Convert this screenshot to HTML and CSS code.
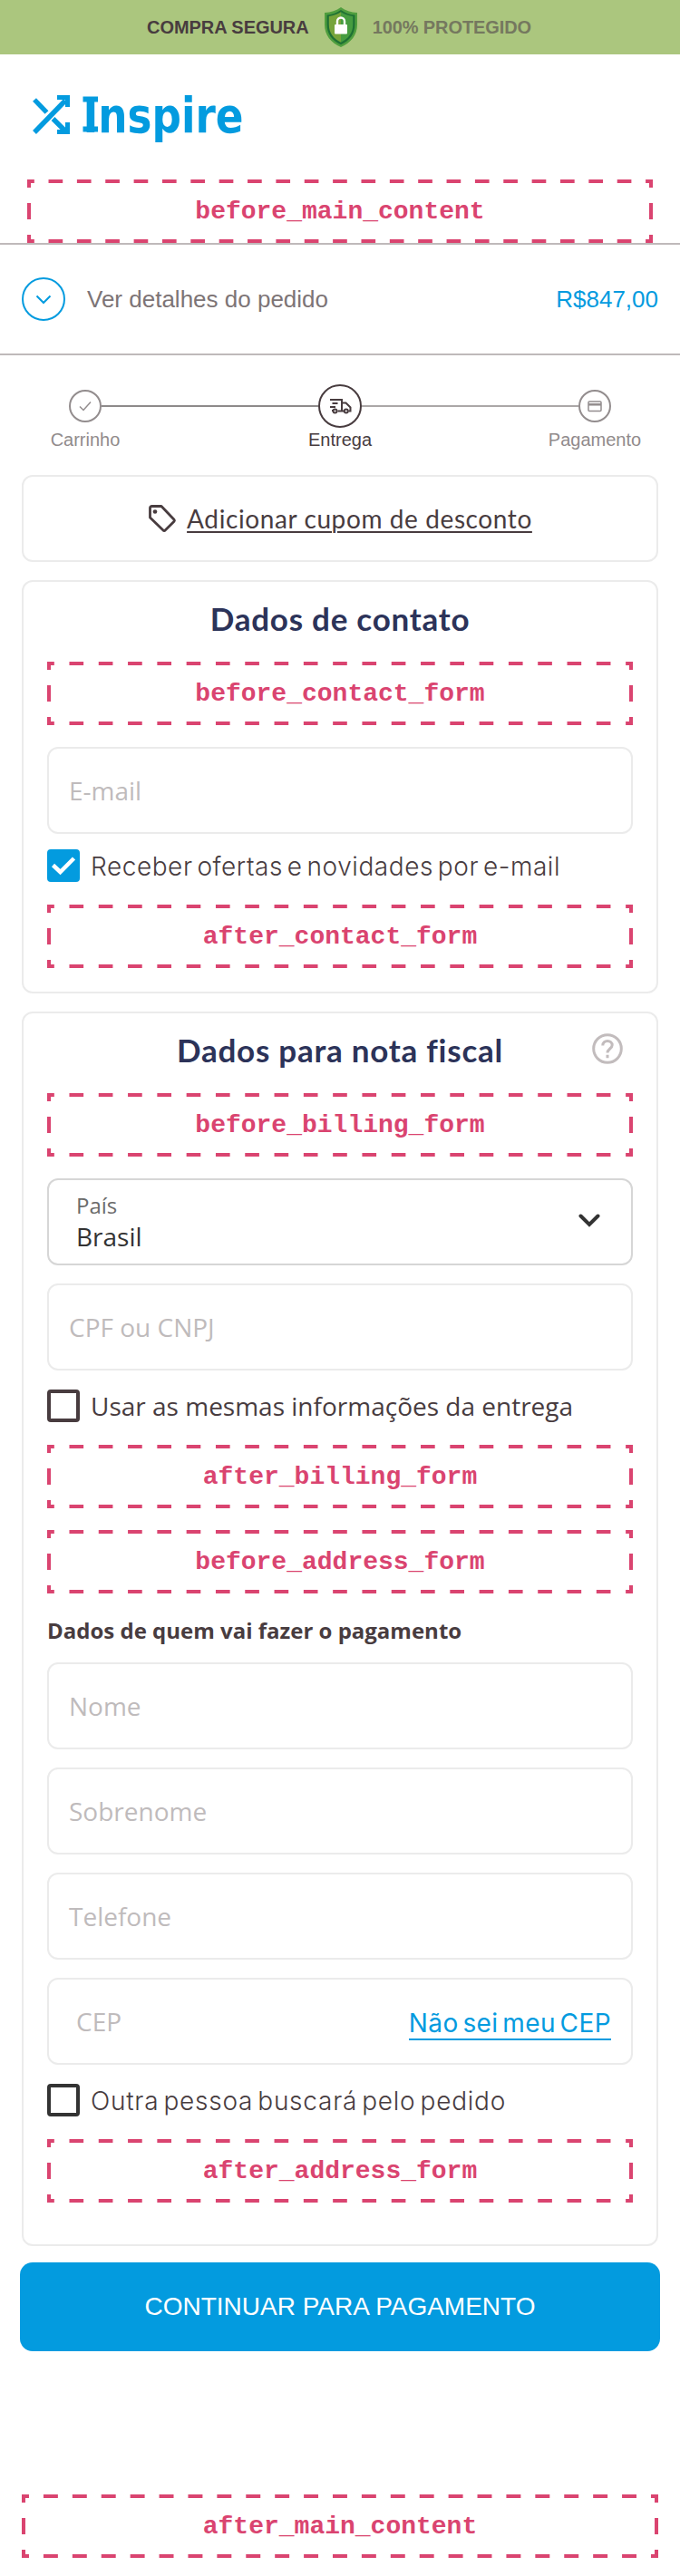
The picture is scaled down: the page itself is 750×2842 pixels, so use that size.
FILE: index.html
```html
<!DOCTYPE html>
<html lang="pt-BR">
<head>
<meta charset="utf-8">
<title>Inspire - Entrega</title>
<link rel="stylesheet" href="styles.css">
</head>
<body>
<header class="banner">
  <span class="banner-strong">COMPRA SEGURA</span>
  <svg class="shield" width="36" height="44" viewBox="0 0 36 44">
    <path d="M18 0C13 4 7 5.600 0 6v13c0 12 7 20 18 25 11-5 18-13 18-25V6C29 5.600 23 4 18 0z" fill="#4f9e3e"/>
    <path d="M18 3C13 6.600 8 8 2.500 8.400V19c0 10.500 6 17.800 15.500 22.300C27.500 36.800 33.500 29.500 33.500 19V8.400C28 8 23 6.600 18 3z" fill="#1f7134"/>
    <path d="M18 5.200c-4 2.700-8 4-13.200 4.700V19c0 9.500 5 15.500 13.200 19.700z" fill="#76a43a"/>
    <path d="M18 5.200c4 2.700 8 4 13.200 4.700V19c0 9.500-5 15.500-13.200 19.700z" fill="#469c40"/>
    <rect x="11" y="19" width="14" height="10.500" rx="1" fill="#fff"/>
    <path d="M14 20v-4.500a4 4 0 0 1 8 0V20" fill="none" stroke="#fff" stroke-width="2.400"/>
  </svg>
  <span class="banner-soft">100% PROTEGIDO</span>
</header>

<div class="brand">
  <svg class="logo" width="244" height="84" viewBox="0 -14 244 84">
    <g fill="none" stroke="#039bdf" stroke-width="5.400">
      <path d="M2 42L36 7"/><path d="M2 6l13.500 14"/><path d="M22.500 27L37 41.500"/>
    </g>
    <path d="M27 1h14v13h-5V6h-9zM27 44h14V31h-5v8h-9z" fill="#039bdf"/>
    <path d="M55.500 2.500h16.500v6H55.500zM55.500 35.500h16.500v6H55.500z" fill="#039bdf"/>
    <text class="logo-text" x="55.500" y="41.500" textLength="177" lengthAdjust="spacingAndGlyphs">Inspire</text>
  </svg>
</div>

<div class="slot slot-top">before_main_content</div>

<section class="summary">
  <svg width="48" height="48" viewBox="0 0 48 48" fill="none" stroke="#039bdf" stroke-width="2">
    <circle cx="24" cy="24" r="23"/><path d="M16.500 20.500L24 28l7.500-7.500"/>
  </svg>
  <span class="summary-label">Ver detalhes do pedido</span>
  <span class="summary-total">R$847,00</span>
</section>

<nav class="steps">
  <div class="track">
    <svg width="36" height="36" viewBox="0 0 36 36" fill="none" stroke="#938d8e" stroke-width="2">
      <circle cx="18" cy="18" r="17"/><path d="M12 18.500l4 4 8-9" stroke-width="1.500"/>
    </svg>
    <span class="line line-done"></span>
    <svg width="48" height="48" viewBox="0 0 48 48" fill="none" stroke="#483c3f" stroke-width="2">
      <circle cx="24" cy="24" r="23"/>
      <path d="M13 17h13v12.500h-4.500M26 20.500h4.500l5 5v4h-2M15.500 21h6M13 25h6M15 29h1.500M26 29.500h2"/>
      <circle cx="18.500" cy="29.500" r="2"/><circle cx="30.800" cy="29.500" r="2"/>
    </svg>
    <span class="line"></span>
    <svg width="36" height="36" viewBox="0 0 36 36" fill="none" stroke="#938d8e" stroke-width="2">
      <circle cx="18" cy="18" r="17"/><rect x="11" y="13" width="14" height="10.500" rx="1" stroke-width="1.500"/><path d="M11 16.300h14" stroke-width="2.500"/>
    </svg>
  </div>
  <div class="step-names"><span>Carrinho</span><span class="current">Entrega</span><span>Pagamento</span></div>
</nav>

<main class="content">
  <section class="card coupon">
    <svg width="32" height="32" viewBox="0 0 32 32" fill="none" stroke="#483c3f" stroke-width="2.800">
      <path d="M2.500 4.500a2 2 0 0 1 2-2H15L29 17.200a1.500 1.500 0 0 1 0 2L19.200 29a1.500 1.500 0 0 1-2.200 0L2.500 15z" stroke-linejoin="round"/>
      <circle cx="8" cy="8.500" r="2.300" fill="#483c3f" stroke="none"/>
    </svg>
    <a class="coupon-link">Adicionar cupom de desconto</a>
  </section>

  <section class="card contact">
    <h2 class="title">Dados de contato</h2>
    <div class="slot">before_contact_form</div>
    <div class="field first">E-mail</div>
    <label class="check offers"><span class="box checked"><svg width="28" height="22" viewBox="0 0 28 22" fill="none" stroke="#fff" stroke-width="4.500"><path d="M2.500 10.500l8 7.500L25.500 3"/></svg></span><span class="sans">Receber ofertas e novidades por e-mail</span></label>
    <div class="slot">after_contact_form</div>
  </section>

  <section class="card billing">
    <div class="title-row">
      <h2 class="title title-billing">Dados para nota fiscal</h2>
      <svg class="help" width="34" height="34" viewBox="0 0 34 34" fill="none" stroke="#c2bcbd" stroke-width="3">
        <circle cx="17" cy="17" r="15.300"/><path d="M11.800 13.500c0-6.800 10.400-6.500 10.400-.4 0 3.700-5.200 4.200-5.200 8.400M17 23.800v3.400"/>
      </svg>
    </div>
    <div class="slot">before_billing_form</div>
    <div class="field select first">
      <div class="select-text"><span class="select-label">País</span><span>Brasil</span></div>
      <svg width="24" height="16" viewBox="0 0 24 16" fill="none" stroke="#333" stroke-width="4"><path d="M2.500 2.500L12 12l9.500-9.500" stroke-linecap="round"/></svg>
    </div>
    <div class="field">CPF ou CNPJ</div>
    <label class="check same"><span class="box"></span><span>Usar as mesmas informações da entrega</span></label>
    <div class="slot">after_billing_form</div>
    <div class="slot slot-address">before_address_form</div>
    <h3 class="payer">Dados de quem vai fazer o pagamento</h3>
    <div class="field name">Nome</div>
    <div class="field">Sobrenome</div>
    <div class="field">Telefone</div>
    <div class="field cep"><span>CEP</span><a class="cep-link sans">Não sei meu CEP</a></div>
    <label class="check other"><span class="box dark"></span><span class="sans">Outra pessoa buscará pelo pedido</span></label>
    <div class="slot">after_address_form</div>
  </section>
</main>

<div class="button">CONTINUAR PARA PAGAMENTO</div>
<div class="slot slot-end">after_main_content</div>
</body>
</html>
```
FILE: styles.css
```css
* { box-sizing: border-box; }
body { margin: 0; background: #fff; color: #483c3f; font-family: "Liberation Sans", Arial, sans-serif; }
svg { flex: none; display: block; }

.banner { height: 60px; background: #abc67e; display: flex; align-items: center; justify-content: center; gap: 17px; font-size: 20px; font-weight: 700; line-height: 24px; }
.banner-strong { letter-spacing: -0.05px; }
.banner-soft { color: #75785f; padding-right: 2px; letter-spacing: -0.1px; }

.brand { height: 138px; padding: 30px 0 0 36px; }
.logo-text { font-family: "DejaVu Sans Condensed", "DejaVu Sans", sans-serif; font-weight: 700; font-size: 53px; fill: #039bdf; }

/* Dashed extension slot: each tile holds half a dash at both ends */
.slot {
  --c: #da4470;
  --h: linear-gradient(90deg, var(--c) 8px, transparent 8px calc(100% - 8px), var(--c) calc(100% - 8px));
  --v: linear-gradient(var(--c) 9px, transparent 9px calc(100% - 9px), var(--c) calc(100% - 9px));
  --n: 20;
  height: 70px; padding-top: 2px;
  display: flex; align-items: center; justify-content: center;
  background: var(--h) 0 0 / calc(100% / var(--n)) 4px repeat-x, var(--h) 0 100% / calc(100% / var(--n)) 4px repeat-x,
    var(--v) 0 0 / 4px 35px repeat-y, var(--v) 100% 0 / 4px 35px repeat-y;
  color: #da4470; font: 700 28px/32px "Liberation Mono", "Courier New", monospace;
}
.slot-top { --n: 22; margin: 0 30px; }

.summary { height: 124px; border-top: 2px solid #bfb9ba; border-bottom: 2px solid #bfb9ba; padding: 0 24px; display: flex; align-items: center; font-size: 26px; }
.summary-label { margin-left: 24px; color: #7d7476; }
.summary-total { margin-left: auto; color: #039bdf; }

.steps { height: 132px; padding: 32px 42px 0; }
.track { display: flex; align-items: center; padding: 0 34px; }
.line { flex: 1; height: 2px; background: #aba7a7; }
.line-done { background: #8d8a8a; }
.step-names { display: flex; justify-content: space-between; font-size: 20px; line-height: 26px; color: #918b8c; text-align: center; }
.step-names span { width: 104px; }
.step-names .current { color: #483c3f; }

.content { padding: 0 24px; display: flex; flex-direction: column; gap: 20px; }
.card { border: 2px solid #ebebeb; border-radius: 12px; padding: 0 26px; }
.coupon { height: 96px; display: flex; align-items: center; justify-content: center; gap: 11px; }
.coupon-link { font: 400 28px/34px Lato, sans-serif; letter-spacing: 0.6px; text-decoration: underline; text-decoration-thickness: 2px; text-underline-offset: 3px; }
.title { margin: 0; text-align: center; color: #2c3359; font: 700 35px/40px Lato, sans-serif; letter-spacing: 0.75px; white-space: nowrap; }
.contact { height: 456px; }
.contact .title, .title-row { padding-top: 20px; margin-bottom: 28px; }
.title-row { display: grid; grid-template-columns: 34px 1fr 34px; padding: 20px 11px 0 11px; }
.title-billing { grid-column: 2; }
.help { margin-top: 2px; }

.field { height: 96px; margin-top: 20px; border: 2px solid #ebebeb; border-radius: 12px; padding: 0 22px; display: flex; align-items: center; font: 400 28px/36px "Open Sans", "Noto Sans", sans-serif; color: #bfbbbc; }
.field.first { margin-top: 24px; }
.select { border-color: #d6d6d6; color: #333; padding: 0 34px 2px 30px; justify-content: space-between; }
.select-text { display: flex; flex-direction: column; }
.select-label { font-size: 24px; line-height: 33px; color: #6b6b6b; }
.cep { padding-left: 30px; justify-content: space-between; }
.sans { font-family: Inter, sans-serif; font-weight: 300; letter-spacing: 0.55px; word-spacing: -3.5px; padding-top: 2px; }
.cep-link { color: #039bdf; border-bottom: 2px solid #039bdf; line-height: 34px; padding-top: 0; margin-top: 5px; font-weight: 400; letter-spacing: 0.4px; }

.check { display: flex; align-items: center; gap: 12px; height: 36px; font: 400 28px/36px "Open Sans", "Noto Sans", sans-serif; white-space: nowrap; }
.box { width: 36px; height: 36px; border: 4px solid #483c3f; border-radius: 4px; display: flex; align-items: center; justify-content: center; flex: none; }
.box.checked { background: #039bdf; border-color: #039bdf; }
.box.dark { border-color: #333; }
.offers { margin: 17px 0 25px; }
.same { margin: 21px 0 25px; }
.other { margin: 21px 0 25px; }
.other .sans { letter-spacing: 0.75px; }
.slot-address { margin-top: 24px; }
.payer { margin: 24px 0 0; font: 700 24px/33px "Open Sans", "Noto Sans", sans-serif; }
.field.name { margin-top: 19px; }
.billing { height: 1362px; }

.button { margin: 18px 22px 0; height: 98px; border-radius: 14px; background: #039bdf; color: #fff; font-size: 28px; display: flex; align-items: center; justify-content: center; }
.slot-end { --n: 22; margin: 158px 24px 20px; }
```
